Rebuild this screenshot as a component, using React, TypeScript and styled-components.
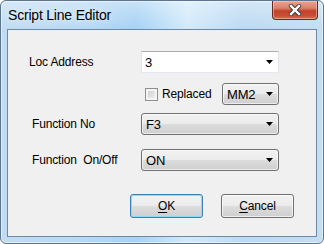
import { createGlobalStyle, styled } from 'styled-components';

const GlobalStyle = createGlobalStyle`
  html, body {
    margin: 0;
    padding: 0;
    background: #ffffff;
  }
  body {
    font-family: "Liberation Sans", Arial, sans-serif;
  }
`;

const Window = styled.div`
  box-sizing: border-box;
  width: 324px;
  height: 244px;
  display: flex;
  flex-direction: column;
  padding: 0 6px 6px;

  border: 1px solid #5b7590;
  border-radius: 6px;
  background:
    linear-gradient(180deg, rgba(255, 255, 255, 0.35) 0px, rgba(255, 255, 255, 0) 28px),
    linear-gradient(90deg, #c2dcf2 0%, #b8d9f4 25%, #a6d2f5 42%, #d3eafa 58%, #bcdaf3 75%, #c4ddf2 100%);
  box-shadow: inset 0 0 0 1px rgba(255, 255, 255, 0.55);
`;

const TitleBar = styled.div`
  display: flex;
  justify-content: space-between;
  align-items: flex-start;
  height: 28px;
`;

const Title = styled.span`
  margin: 6px 0 0 1px;
  font-size: 14px;
  line-height: 16px;
  letter-spacing: -0.2px;
  color: #000000;
  text-shadow: 0 0 6px rgba(255, 255, 255, 0.9);
`;

const CloseButton = styled.div`
  box-sizing: border-box;
  display: flex;
  align-items: center;
  justify-content: center;
  width: 46px;
  height: 19px;
  margin-right: -1px;

  border: 1px solid #6b2a1e;
  border-top: none;
  border-radius: 0 0 4px 4px;
  background: linear-gradient(180deg, #eba393 0%, #d9806a 40%, #c2412a 55%, #c74d33 80%, #d9704f 100%);
  box-shadow: inset 0 0 0 1px rgba(255, 220, 210, 0.45);
`;

const Client = styled.div`
  flex: 1;
  display: flex;
  flex-direction: column;
  padding: 21px 22px 0 21px;

  border: 1px solid #6f89a4;
  background: #f0f0f0;
  font-size: 12px;
  letter-spacing: -0.15px;
  color: #000000;
`;

const Row = styled.div<{ $gap: number }>`
  display: grid;
  grid-template-columns: 112px 138px;
  align-items: center;
  height: 22px;
  margin-top: ${({ $gap }) => $gap}px;
`;

const Label = styled.span<{ $indent?: number }>`
  padding-left: ${({ $indent }) => $indent ?? 0}px;
  white-space: pre;
`;

const Combo = styled.div<{ $editable?: boolean; $width?: number }>`
  box-sizing: border-box;
  display: flex;
  align-items: center;
  justify-content: space-between;
  width: ${({ $width }) => $width ?? 138}px;
  height: 22px;
  padding: 0 5px 0 ${({ $editable }) => ($editable ? 3 : 4)}px;
  font-size: 13px;

  ${({ $editable }) =>
    $editable
      ? `
    border: 1px solid #e2e3ea;
    border-top-color: #abadb3;
    border-bottom-color: #e3e9ef;
    background: #ffffff;
  `
      : `
    border: 1px solid #707070;
    border-radius: 3px;
    background: linear-gradient(180deg, #f2f2f2 0%, #ebebeb 50%, #dddddd 50%, #cfcfcf 100%);
    box-shadow: inset 0 0 0 1px rgba(255, 255, 255, 0.6);
  `}
`;

const Options = styled.div`
  display: flex;
  align-items: center;
  padding-left: 4px;
`;

const CheckBox = styled.span`
  box-sizing: border-box;
  width: 13px;
  height: 13px;
  margin-right: 4px;

  border: 1px solid #8e8f8f;
  background: linear-gradient(135deg, #c9c9c9 0%, #e4e4e4 60%, #f4f4f4 100%);
  box-shadow: inset 0 0 0 2px #f4f4f4;
`;

const Spacer = styled.span`
  flex: 1;
`;

const ButtonBar = styled.div`
  display: flex;
  justify-content: flex-end;
  gap: 18px;
  margin-top: 23px;
`;

const Button = styled.div<{ $default?: boolean }>`
  box-sizing: border-box;
  display: flex;
  align-items: center;
  justify-content: center;
  width: 73px;
  height: 24px;

  border: 1px solid ${({ $default }) => ($default ? '#3c7fb1' : '#707070')};
  border-radius: 3px;
  background: linear-gradient(180deg, #f2f2f2 0%, #ebebeb 50%, #dddddd 50%, #cfcfcf 100%);
  box-shadow: inset 0 0 0 1px ${({ $default }) => ($default ? '#8fd9f8' : 'rgba(255, 255, 255, 0.7)')};

  & u {
    text-decoration-thickness: 1px;
    text-underline-offset: 2px;
  }
`;

const Arrow = () => (
  <svg width="7" height="4" viewBox="0 0 7 4">
    <polygon points="0,0 7,0 3.5,4" fill="#000000" />
  </svg>
);

const CloseGlyph = () => (
  <svg width="14" height="12" viewBox="0 0 14 12">
    <path d="M3 2 L11 10 M11 2 L3 10" stroke="#3a3a3a" strokeWidth="4.4" strokeLinecap="round" />
    <path d="M3 2 L11 10 M11 2 L3 10" stroke="#ffffff" strokeWidth="2.4" strokeLinecap="square" />
  </svg>
);

const App = () => {
  return (
    <>
      <GlobalStyle />
      <Window>
        <TitleBar>
          <Title>Script Line Editor</Title>
          <CloseButton>
            <CloseGlyph />
          </CloseButton>
        </TitleBar>
        <Client>
          <Row $gap={0}>
            <Label>Loc Address</Label>
            <Combo $editable>
              <span>3</span>
              <Arrow />
            </Combo>
          </Row>
          <Row $gap={10}>
            <span />
            <Options>
              <CheckBox />
              <span>Replaced</span>
              <Spacer />
              <Combo $width={57}>
                <span>MM2</span>
                <Arrow />
              </Combo>
            </Options>
          </Row>
          <Row $gap={8}>
            <Label $indent={3}>Function No</Label>
            <Combo>
              <span>F3</span>
              <Arrow />
            </Combo>
          </Row>
          <Row $gap={14}>
            <Label $indent={3}>{'Function  On/Off'}</Label>
            <Combo>
              <span>ON</span>
              <Arrow />
            </Combo>
          </Row>
          <ButtonBar>
            <Button $default>
              <span>
                <u>O</u>K
              </span>
            </Button>
            <Button>
              <span>
                <u>C</u>ancel
              </span>
            </Button>
          </ButtonBar>
        </Client>
      </Window>
    </>
  );
};

export default App;
